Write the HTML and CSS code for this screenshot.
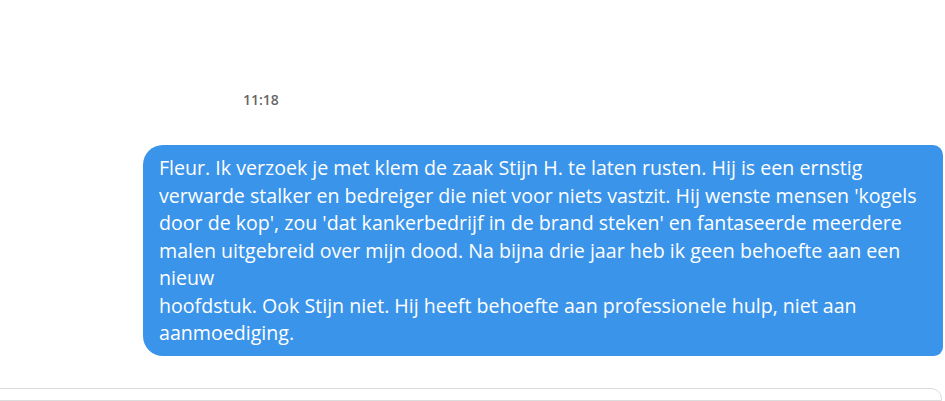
FILE: index.html
```html
<!DOCTYPE html>
<html lang="nl">
<head>
<meta charset="utf-8">
<link rel="stylesheet" href="styles.css">
</head>
<body>
<main class="chat">
  <div class="time">11:18</div>
  <div class="bubble">
    <p>Fleur. Ik verzoek je met klem de zaak Stijn H. te laten rusten. Hij is een ernstig verwarde stalker en bedreiger die niet voor niets vastzit. Hij wenste mensen 'kogels door de kop', zou 'dat kankerbedrijf in de brand steken' en fantaseerde meerdere malen uitgebreid over mijn dood. Na bijna drie jaar heb ik geen behoefte aan een nieuw</p>
    <p>hoofdstuk. Ook Stijn niet. Hij heeft behoefte aan professionele hulp, niet aan aanmoediging.</p>
  </div>
  <div class="composer"></div>
</main>
</body>
</html>
```
FILE: styles.css
```css
html, body {
  margin: 0;
  padding: 0;
  background: #ffffff;
  overflow: hidden;
}
.chat {
  width: 945px;
  height: 401px;
  display: flex;
  flex-direction: column;
  font-family: "Open Sans", "Noto Sans", sans-serif;
}
.time {
  margin: 90px 0 0 243px;
  height: 20px;
  font-size: 14px;
  font-weight: 600;
  color: #666666;
  line-height: 20px;
}
.bubble {
  box-sizing: border-box;
  width: 800px;
  margin: 35px 0 0 143px;
  padding: 9px 10px 9px 16px;
  background: #3a94ea;
  color: #ffffff;
  border-radius: 20px 10px 9px 20px;
  font-size: 19.6px;
  line-height: 27.5px;
}
.bubble p {
  margin: 0;
}
.composer {
  box-sizing: border-box;
  width: 944px;
  margin: 32px 0 0 -2px;
  height: 40px;
  border: 1px solid #dcdcdc;
  border-radius: 0 11px 0 0;
}
```
